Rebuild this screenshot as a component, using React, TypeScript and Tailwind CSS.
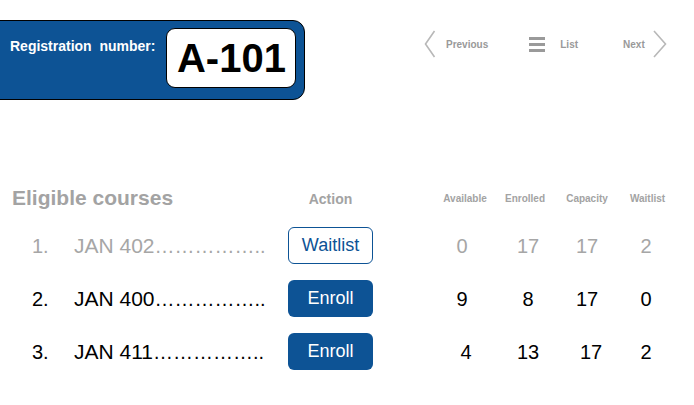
import React from "react";

const BLUE = "bg-[#0d5395]";

type Row = {
  n: string;
  course: string;
  action: "Waitlist" | "Enroll";
  vals: [string, string, string, string];
  muted?: boolean;
  shift?: [boolean, boolean, boolean, boolean];
};

const rows: Row[] = [
  { n: "1.", course: "JAN 402", action: "Waitlist", vals: ["0", "17", "17", "2"], muted: true },
  { n: "2.", course: "JAN 400", action: "Enroll", vals: ["9", "8", "17", "0"] },
  { n: "3.", course: "JAN 411", action: "Enroll", vals: ["4", "13", "17", "2"], shift: [true, false, true, false] },
];

const GRID = "grid grid-cols-[288px_85px_56px_66px_66px_52px_66px]";

export default function App() {
  return (
    <div
      className="w-[694px] h-[405px] bg-white overflow-hidden"
      style={{ fontFamily: '"Liberation Sans", Arial, sans-serif' }}
    >
      {/* Header */}
      <div className="flex items-start pt-[20px]">
        <div className={`-ml-[14px] w-[319px] h-[80px] ${BLUE} border border-black rounded-r-[12px] flex items-start pl-[23px] pt-[7px]`}>
          <div className="mt-[10px] text-white font-bold text-[14px] leading-[16px] whitespace-pre">
            Registration  number:
          </div>
          <div className="ml-[11px] w-[130px] h-[60px] bg-white border border-black rounded-[9px] flex items-center justify-center">
            <span className="text-[40px] font-bold leading-none text-black">A-101</span>
          </div>
        </div>

        <div className="ml-[119px] h-[48px] flex items-center text-[#999999] text-[10px] font-bold">
          <svg width="12" height="28" viewBox="0 0 12 28" className="shrink-0">
            <path d="M10.5 1 L1.5 14 L10.5 27" fill="none" stroke="#b8b8b8" strokeWidth="1.6" />
          </svg>
          <span className="ml-[10px]">Previous</span>
          <span className="ml-[41px] flex flex-col gap-[3px]">
            <span className="block w-[16px] h-[3px] bg-[#9a9a9a]" />
            <span className="block w-[16px] h-[3px] bg-[#9a9a9a]" />
            <span className="block w-[16px] h-[3px] bg-[#9a9a9a]" />
          </span>
          <span className="ml-[15px]">List</span>
          <span className="ml-[45px]">Next</span>
          <svg width="16" height="28" viewBox="0 0 16 28" className="ml-[7px] shrink-0">
            <path d="M2 1 L13.5 14 L2 27" fill="none" stroke="#b8b8b8" strokeWidth="1.6" />
          </svg>
        </div>
      </div>

      {/* Table */}
      <div className="mt-[86px]">
        <div className={`${GRID} items-start`}>
          <div className="pl-[12px] text-[21px] font-bold leading-[24px] text-[#a3a3a3]">Eligible courses</div>
          <div className="mt-[5px] text-center text-[14px] font-bold text-[#a3a3a3] leading-[16px]">Action</div>
          <div />
          <div className="mt-[7px] text-center text-[10px] font-bold text-[#a3a3a3] pl-[6px] leading-[12px]">Available</div>
          <div className="mt-[7px] text-center text-[10px] font-bold text-[#a3a3a3] pr-[6px] leading-[12px]">Enrolled</div>
          <div className="mt-[7px] text-center text-[10px] font-bold text-[#a3a3a3] leading-[12px]">Capacity</div>
          <div className="mt-[7px] text-center text-[10px] font-bold text-[#a3a3a3] pl-[3px] leading-[12px]">Waitlist</div>
        </div>

        <div className="mt-[17px] flex flex-col gap-[16px]">
          {rows.map((r) => {
            const color = r.muted ? "text-[#a6a6a6]" : "text-black";
            return (
              <div key={r.n} className={`${GRID} items-center h-[37px]`}>
                <div className={`flex items-center pl-[32px] ${color}`}>
                  <span className="w-[42px] text-[20px]">{r.n}</span>
                  <span className="whitespace-pre text-[21px]">{r.course}<span className="text-[20px]">……………..</span></span>
                </div>
                {r.action === "Waitlist" ? (
                  <div className="h-[37px] rounded-[6px] border border-[#0d5395] bg-white text-[#0d5395] text-[18px] flex items-center justify-center">
                    Waitlist
                  </div>
                ) : (
                  <div className={`h-[37px] rounded-[6px] ${BLUE} text-white text-[18px] flex items-center justify-center`}>
                    Enroll
                  </div>
                )}
                <div />
                {r.vals.map((v, i) => (
                  <div
                    key={i}
                    className={`text-center text-[20px] ${color} ${r.shift && r.shift[i] ? "pl-[8px]" : ""}`}
                  >
                    {v}
                  </div>
                ))}
              </div>
            );
          })}
        </div>
      </div>
    </div>
  );
}
